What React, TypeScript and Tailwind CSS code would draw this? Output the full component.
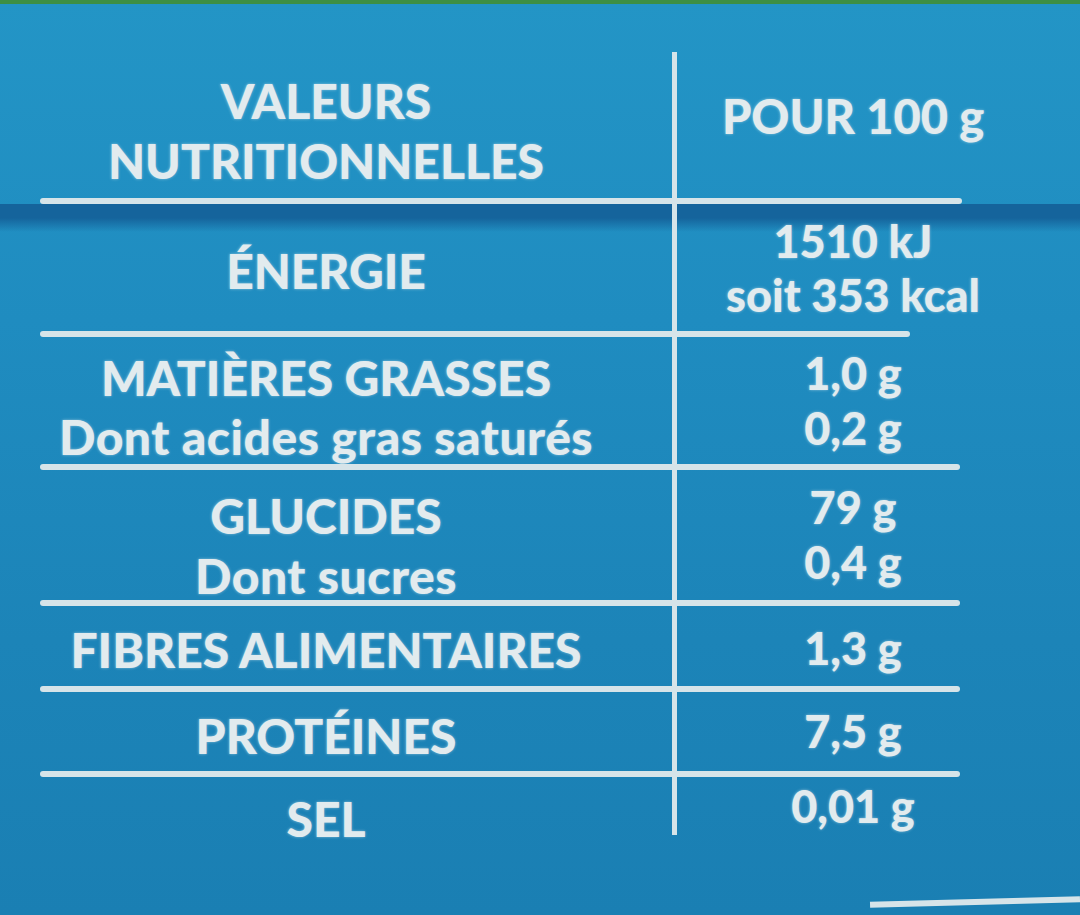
const font = { fontFamily: "Lato, 'Open Sans', sans-serif" };

const ink =
  "text-[#e2ebee] font-black [text-shadow:0_0_3px_rgba(225,240,245,0.55)]";

function Line({ end = "w-[920px]" }: { end?: string }) {
  return (
    <div className="flex h-[6px] shrink-0">
      <div className={`ml-[40px] h-full ${end} rounded-full bg-[#d6e4e9] blur-[0.6px]`} />
    </div>
  );
}

export default function App() {
  return (
    <div
      style={font}
      className="w-[1080px] h-[915px] overflow-hidden flex flex-col bg-[linear-gradient(180deg,#2395c6_0%,#1f8cc0_35%,#1c84b8_70%,#1a7fb3_100%)]"
    >
      {/* green edge of the pack */}
      <div className="h-[4px] shrink-0 bg-[#3d8f45]" />

      {/* header */}
      <div className="flex h-[194px] shrink-0">
        <div className={`w-[652px] pt-[67px] flex flex-col items-center text-[48px] leading-[60px] ${ink}`}>
          <span>VALEURS</span>
          <span>NUTRITIONNELLES</span>
        </div>
        <div className="w-[20px]" />
        <div className={`mt-[48px] w-[357px] border-l-[5px] border-[#d6e4e9] pt-[34px] flex justify-center text-[47px] leading-[60px] ${ink}`}>
          <span>POUR 100 g</span>
        </div>
      </div>
      <Line end="w-[922px]" />

      {/* energie */}
      <div className="flex h-[127px] shrink-0 bg-[linear-gradient(180deg,#15649c_0px,#15649c_14px,rgba(21,100,156,0)_28px)]">
        <div className={`w-[652px] pt-[6px] flex items-center justify-center text-[48px] ${ink}`}>
          <span>ÉNERGIE</span>
        </div>
        <div className="w-[20px]" />
        <div className={`w-[357px] border-l-[5px] border-[#d6e4e9] flex flex-col items-center justify-center text-[45px] leading-[54px] ${ink}`}>
          <span>1510 kJ</span>
          <span>soit 353 kcal</span>
        </div>
      </div>
      <Line end="w-[870px]" />

      {/* matieres grasses */}
      <div className="flex h-[127px] shrink-0">
        <div className={`w-[652px] pt-[12px] flex flex-col items-center justify-center text-[48px] leading-[59px] ${ink}`}>
          <span>MATIÈRES GRASSES</span>
          <span className="tracking-[0.5px]">Dont acides gras saturés</span>
        </div>
        <div className="w-[20px]" />
        <div className={`w-[357px] border-l-[5px] border-[#d6e4e9] flex flex-col items-center justify-center text-[45px] leading-[55px] ${ink}`}>
          <span>1,0 g</span>
          <span>0,2 g</span>
        </div>
      </div>
      <Line />

      {/* glucides */}
      <div className="flex h-[130px] shrink-0">
        <div className={`w-[652px] pt-[22px] flex flex-col items-center justify-center text-[48px] leading-[60px] ${ink}`}>
          <span>GLUCIDES</span>
          <span className="tracking-[0.5px]">Dont sucres</span>
        </div>
        <div className="w-[20px]" />
        <div className={`w-[357px] border-l-[5px] border-[#d6e4e9] flex flex-col items-center justify-center text-[45px] leading-[55px] ${ink}`}>
          <span>79 g</span>
          <span>0,4 g</span>
        </div>
      </div>
      <Line />

      {/* fibres */}
      <div className="flex h-[80px] shrink-0">
        <div className={`w-[652px] pt-[8px] flex items-center justify-center text-[48px] ${ink}`}>
          <span>FIBRES ALIMENTAIRES</span>
        </div>
        <div className="w-[20px]" />
        <div className={`w-[357px] border-l-[5px] border-[#d6e4e9] pt-[6px] flex items-center justify-center text-[45px] ${ink}`}>
          <span>1,3 g</span>
        </div>
      </div>
      <Line />

      {/* proteines */}
      <div className="flex h-[79px] shrink-0">
        <div className={`w-[652px] pt-[8px] flex items-center justify-center text-[48px] ${ink}`}>
          <span>PROTÉINES</span>
        </div>
        <div className="w-[20px]" />
        <div className={`w-[357px] border-l-[5px] border-[#d6e4e9] flex items-center justify-center text-[45px] ${ink}`}>
          <span>7,5 g</span>
        </div>
      </div>
      <Line />

      {/* sel */}
      <div className="flex h-[122px] shrink-0">
        <div className={`w-[652px] pt-[12px] flex items-start justify-center text-[48px] leading-[60px] ${ink}`}>
          <span>SEL</span>
        </div>
        <div className="w-[20px]" />
        <div className={`w-[357px] h-[58px] border-l-[5px] border-[#d6e4e9] flex items-start justify-center text-[45px] leading-[58px] ${ink}`}>
          <span>0,01 g</span>
        </div>
      </div>

      {/* edge of the next panel */}
      <div className="flex h-[6px] shrink-0">
        <div className="ml-[870px] h-full flex-1 -rotate-[1.5deg] bg-[#d6e4e9] blur-[0.6px]" />
      </div>
    </div>
  );
}
